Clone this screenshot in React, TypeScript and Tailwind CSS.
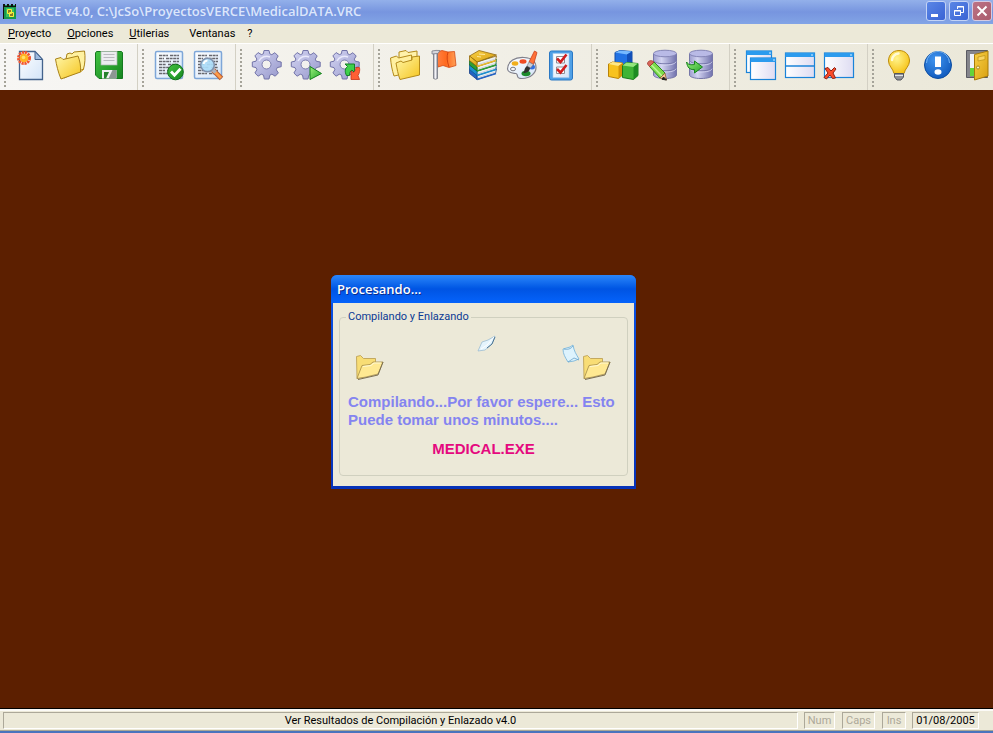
import React from 'react';

interface ToolItem {
  label: string;
  icon: React.ReactNode;
}

interface ToolGroup {
  width: string;
  items: ToolItem[];
}

const GEAR_PATH =
  'M13 1.500h5l.8 3.300 2 .9 3.100-2 3.300 3.300-1.900 3.100.9 2.100 4 .8v4.700l-4 .9-.9 2.200 2.100 3.100-3.200 3.300-3.300-2-2 .9-.9 3.900h-4.700l-.8-3.900-2.200-.9-3.200 2-3.200-3.200 2-3.300-.9-2.100-3.700-.9V13l3.700-.8.9-2.200-2-3.100 3.200-3.300 3.300 2 2-.8z';

const Gear: React.FC = () => (
  <>
    <path d={GEAR_PATH} fill="url(#steel)" stroke="#7273a8" strokeWidth="1" strokeLinejoin="round" />
    <circle cx="15.500" cy="15.500" r="4.500" fill="#f2f1ee" stroke="#7c7db0" strokeWidth="1" />
    <path d="M8 12a8.500 8.500 0 0 1 11-4" fill="none" stroke="#e9e9fb" strokeWidth="1.500" />
  </>
);

const Report: React.FC = () => (
  <>
    <rect x="2.500" y="2.500" width="27" height="27" rx="1.500" fill="url(#paper)" stroke="#7ea6d8" strokeWidth="1.500" />
    <path
      d="M6 6.500h9M17 6.500h9M6 9.500h5M13 9.500h13M6 12.500h12M20 12.500h6M6 15.500h7M15 15.500h10M6 18.500h11M19 18.500h7M6 21.500h6M14 21.500h12M6 24.500h9M17 24.500h6"
      stroke="#66666c"
      strokeWidth="1.600"
      strokeDasharray="3 .6"
    />
  </>
);

const Database: React.FC<{ x: number }> = ({ x }) => (
  <g transform={`translate(${x} 0)`}>
    <path d="M.5 5v21c0 2 5 3.500 11.500 3.500S23.500 28 23.500 26V5z" fill="url(#cyl)" stroke="#7677a8" />
    <ellipse cx="12" cy="4.500" rx="11.500" ry="3.300" fill="#b9bae6" stroke="#8485b6" />
    <path d="M.5 11.500c1 2.500 6 3.300 11.500 3.300s10.500-.8 11.500-3.300M.5 18.500c1 2.500 6 3.300 11.500 3.300s10.500-.8 11.500-3.300" fill="none" stroke="#7475a9" />
    <path d="M1 12.700c1 2.500 6 3.300 11 3.300s10-.8 11-3.300M1 19.700c1 2.500 6 3.300 11 3.300s10-.8 11-3.300" fill="none" stroke="#dcdcf6" strokeWidth=".8" />
  </g>
);

const Book: React.FC<{ y: number; cover: string; edge: string }> = ({ y, cover, edge }) => (
  <g transform={`translate(0 ${y})`}>
    <path d="M10 13l19.500-6-1 4.500L10 17.500z" fill="#eef2f4" stroke={edge} strokeWidth=".8" />
    <path d="M11 15.500l17.500-5.500" stroke="#b7bcc6" strokeWidth=".6" />
    <path d="M2.500 7L12 1.500 29.500 6 10 13z" fill={cover} stroke={edge} strokeWidth=".8" />
    <path d="M2.500 7L10 13v4.500L2.500 11.500z" fill={cover} stroke={edge} strokeWidth=".8" />
    <path d="M10 17.500L29 11.500" stroke={cover} strokeWidth="1.500" />
  </g>
);

const NewIcon = (
  <>
    <path d="M4.500 2.500h15.500l7.500 8v20h-23z" fill="url(#paper)" stroke="#44638c" strokeWidth="1.300" />
    <path d="M20 2.500v8h7.500z" fill="#9dbbe0" stroke="#44638c" strokeLinejoin="round" />
    <circle cx="9" cy="9" r="5.500" fill="none" stroke="#f4552e" strokeWidth="3" strokeDasharray="2.200 .7" />
    <circle cx="9" cy="9" r="4.300" fill="#ffb321" />
    <circle cx="8.500" cy="8.500" r="1.800" fill="#ffe06a" />
  </>
);

const OpenIcon = (
  <>
    <path d="M12 10l1-5 3-1 2 1 2-2 10.500-1c1 6 .5 13-1 18L10 29z" fill="#fff1a0" stroke="#a98218" />
    <path d="M1.500 10L7 8.500l2 2 15-3.500c2 5 3 10.500 2.500 16L7 30C4 23 2.500 16 1.500 10z" fill="url(#folder)" stroke="#a98218" />
    <path d="M26.500 23l3.500-3" stroke="#c89a15" />
  </>
);

const SaveIcon = (
  <>
    <path d="M3.500 2.500h25l1 1v26H6l-3.500-3.500v-22z" fill="url(#green)" stroke="#14791f" />
    <rect x="8" y="2.500" width="16" height="13.500" fill="#ececf0" stroke="#a9b6ab" strokeWidth=".7" />
    <path d="M10.500 5.500h11M10.500 8.500h11M10.500 11.500h11" stroke="#b9b9bf" />
    <path d="M9 21h14.500v8.500H9z" fill="#eeeef1" />
    <path d="M11 23h5l-3 6.500h-2z" fill="#26812c" />
    <path d="M19.500 21h4v8.500h-8z" fill="#8d9693" />
  </>
);

const CompileIcon = (
  <>
    <Report />
    <circle cx="22.500" cy="23" r="7.800" fill="url(#green)" stroke="#12701c" />
    <path d="M18 22.500l3.500 3.800 6-6.500" fill="none" stroke="#fff" strokeWidth="2.800" />
  </>
);

const PreviewIcon = (
  <>
    <Report />
    <path d="M21 21l8.500 8.500" stroke="#b45a35" strokeWidth="5" />
    <path d="M21 21l8 8" stroke="#ff9c48" strokeWidth="3" />
    <path d="M20 20l3.500 3.500" stroke="#adb2bd" strokeWidth="3.500" />
    <circle cx="15.500" cy="16" r="6.800" fill="#abdcf8" fillOpacity=".92" stroke="#7e91ad" strokeWidth="1.500" />
    <path d="M11.500 15a4.500 4.500 0 0 1 4-3.500" fill="none" stroke="#fff" strokeWidth="1.800" />
  </>
);

const RunIcon = (
  <>
    <Gear />
    <path d="M20 17.500l11.500 7L20 30.500z" fill="url(#leaf)" stroke="#13801b" strokeLinejoin="round" />
  </>
);

const RebuildIcon = (
  <>
    <Gear />
    <path d="M17.500 26.500c-2-4-1.500-7 1-9L16 15h9.500v8.500L23 21c-2 1.200-2.500 3-2.500 5.500z" fill="#3fd04c" stroke="#137f24" strokeLinejoin="round" />
    <path d="M27 18.500h3.500c.5 3 0 5.500-1.500 8l1.500 4h-8.500V22l2.500 1.500c1.500-1.200 2.500-3 2.500-5z" fill="#ff6034" stroke="#c93317" strokeWidth=".8" strokeLinejoin="round" />
  </>
);

const FoldersIcon = (
  <>
    <path d="M10 8V3l7-1.500 2 2 9-1.500v15l-18 4z" fill="#fff2aa" stroke="#b38a1a" />
    <path d="M1.500 9l6-2 2 2 13-3 1 17L5 27C3 21 2 15 1.500 9z" fill="#fff0a0" stroke="#b38a1a" />
    <path d="M7 14l5-2 2 1.500L23 11V8l7.500-1v19L11 30.500c-2-5-3-11-4-16.500z" fill="url(#folder)" stroke="#b38a1a" />
  </>
);

const FlagIcon = (
  <>
    <path d="M8 3.500l6-2 6 1.500 6.500-.5 1.500 14-7 2-6-2-5 1.500z" fill="url(#flag)" stroke="#d34b14" strokeWidth=".8" />
    <path d="M20 3c-1.500 5-1 9 1 15" stroke="#d34310" fill="none" />
    <path d="M5.500 4h4v25.500q-2 1.500-4 0z" fill="url(#pole)" stroke="#747782" strokeWidth=".8" />
    <path d="M4 5V2q4-1 8-.5l-2 3z" fill="#d5d6dc" stroke="#777a86" strokeWidth=".8" />
  </>
);

const BooksIcon = (
  <>
    <Book y={13} cover="#2463c4" edge="#173f86" />
    <Book y={9} cover="#1c8fd0" edge="#115f96" />
    <Book y={4.5} cover="#2f9e33" edge="#1a6a22" />
    <Book y={0} cover="url(#gold)" edge="#94690d" />
    <path d="M12 5l6 .5M10 7.500l4 .5" stroke="#ffe99d" />
  </>
);

const PaletteIcon = (
  <>
    <path d="M1.500 20C2 12 9 8 18 8.500s12 5 12 10-5 11-14 11c-7 0-3-4-6-5-3-.5-8 0-8.500-4.500z" fill="url(#paper)" stroke="#80808b" strokeWidth="1.200" />
    <ellipse cx="9" cy="14.500" rx="3.300" ry="2.200" fill="#f0ae1d" />
    <ellipse cx="17" cy="12.500" rx="3.500" ry="2.200" fill="#ef4b24" />
    <ellipse cx="7" cy="20" rx="2.500" ry="1.800" fill="#f5f5f7" stroke="#777781" />
    <ellipse cx="26" cy="18" rx="3" ry="2.500" fill="#326fe0" />
    <ellipse cx="20" cy="24.500" rx="4.500" ry="2.800" fill="#1c8b2d" />
    <path d="M23 13l5.500-11 2.500 1.500L27.500 15.500z" fill="#ff7138" stroke="#c9401c" strokeWidth=".8" />
    <path d="M21 17l2-4 4.500 2.500-3 3.500z" fill="#c9ccd4" stroke="#6e717b" strokeWidth=".6" />
    <path d="M17 24c2-2 1-5 4-7l3 2c0 3-3 5-7 5z" fill="#303030" />
  </>
);

const ChecklistIcon = (
  <>
    <rect x="4.500" y="2" width="23" height="29" rx="2" fill="#4fa0e6" stroke="#2a78c4" />
    <rect x="8" y="4.500" width="16" height="24" fill="url(#paper)" stroke="#a7c9ec" strokeWidth=".6" />
    <path d="M11.500 7.500h8v6.500h-8zM11.500 18h8v6.500h-8z" fill="#fff" stroke="#8d8d95" />
    <path d="M12 9.500l3.500 3.500 6-7.500M12 20l3.500 3.500 6-7.500" fill="none" stroke="#d21d1d" strokeWidth="2.600" />
  </>
);

const CubesIcon = (
  <>
    <path d="M8 3.500l5-2 12 1v13l-5 3-12-2z" fill="#2272e4" stroke="#114da8" />
    <path d="M8 3.500l5-2 12 1-5 3z" fill="#76b9ff" />
    <path d="M20 5.500l5-3v13l-5 3z" fill="#124fb8" />
    <path d="M1.500 15l4-2 10 1v12l-4 3.500-10-2z" fill="#f8c21e" stroke="#b98308" />
    <path d="M1.500 15l4-2 10 1-4 3z" fill="#ffe889" />
    <path d="M11.500 17l4-3v12l-4 3.500z" fill="#d59307" />
    <path d="M15.500 16.500l4-3 11.500 1v12l-4.500 4-11-2z" fill="#3fb436" stroke="#187d1c" />
    <path d="M15.500 16.500l4-3 11.500 1-4.500 3.500z" fill="#94e67d" />
    <path d="M26.500 18l4.500-3.500v12l-4.500 4z" fill="#1c8b22" />
  </>
);

const DbEditIcon = (
  <>
    <Database x={7} />
    <path d="M3.500 17.500L8 13l11 11-5 5z" fill="#7ddb4b" stroke="#2f8d22" />
    <path d="M5.500 16L16 27" stroke="#bdf598" strokeWidth="1.500" />
    <path d="M1.500 15c0-3 3-4 5-3L8 13l-4.500 4.500z" fill="#d9665a" stroke="#a2362e" strokeWidth=".8" />
    <path d="M19 24l1.500 7-6.500-2z" fill="#f3c490" stroke="#8a5e35" strokeWidth=".8" />
    <path d="M17.500 28l3 3-4.500-.7z" fill="#222" stroke="#222" />
  </>
);

const DbImportIcon = (
  <>
    <Database x={4} />
    <path d="M1.500 13c2 3 4 3 8 2.500V12l8 6-8 6v-3.500c-5 .5-7-2-8-7.500z" fill="url(#leaf)" stroke="#18861d" />
  </>
);

const CascadeIcon = (
  <>
    <rect x="1.500" y="2" width="25" height="21.500" fill="url(#pane)" stroke="#1a83d8" strokeWidth="1.200" />
    <path d="M1.500 2h25v4h-25z" fill="#2c9bee" />
    <rect x="5.500" y="9" width="25" height="21.500" fill="url(#pane)" stroke="#1a83d8" strokeWidth="1.200" />
    <path d="M5.500 9h25v4h-25z" fill="#2c9bee" />
    <path d="M24 4h2M28 11h2" stroke="#d9efff" />
  </>
);

const TileIcon = (
  <>
    <rect x="1.500" y="4" width="29" height="24.500" fill="url(#pane)" stroke="#1a83d8" strokeWidth="1.200" />
    <path d="M1.500 4h29v4h-29z" fill="#2c9bee" />
    <path d="M1.500 17h29" stroke="#1a83d8" strokeWidth="1.500" />
    <path d="M27 6h2" stroke="#d9efff" />
  </>
);

const CloseWindowIcon = (
  <>
    <rect x="1.500" y="4" width="29" height="24.500" fill="url(#pane)" stroke="#1a83d8" strokeWidth="1.200" />
    <path d="M1.500 4h29v4h-29z" fill="#2c9bee" />
    <path d="M2 19.500l3-1 3 3.500 3.500-3.500 1.500 1.500-3 4 2.500 5-3 .5-2.500-3.500L3.500 30 1 28.500 5 24z" fill="#fb4b2a" stroke="#8a2216" />
    <path d="M27 6h2" stroke="#d9efff" />
  </>
);

const BulbIcon = (
  <>
    <path d="M16 1.500C9.500 1.500 5.500 6 5.500 12c0 5 4.500 7.500 5.500 12.500h10c1-5 5.500-7.500 5.500-12.500 0-6-4-10.500-10.500-10.500z" fill="url(#bulb)" stroke="#bd8c0b" />
    <path d="M9 11c.5-4 3-6 6.500-6.500" stroke="#fffbd6" strokeWidth="2.500" fill="none" strokeLinecap="round" />
    <path d="M11.500 24.500h9v3.500l-2.500 3h-4l-2.500-3z" fill="#8e9098" stroke="#54565e" />
    <path d="M12 26.500h8" stroke="#e3e4e8" />
  </>
);

const InfoIcon = (
  <>
    <circle cx="16" cy="16" r="13.500" fill="url(#info)" stroke="#0d4da0" />
    <path d="M4.500 14a11.500 11.500 0 0 1 23 0" fill="none" stroke="#76b6f6" />
    <path d="M13 7.500h6v10.500h-6z" fill="#fff" />
    <ellipse cx="16" cy="23" rx="3.500" ry="2.800" fill="#fff" />
  </>
);

const DoorIcon = (
  <>
    <path d="M5.500 1.500h21v27h-21z" fill="#85858c" stroke="#5a5a62" />
    <path d="M9 5h8v14H9z" fill="#eef3fb" />
    <path d="M9 19h6v8H9z" fill="#64d43b" />
    <path d="M13.500 5.500l13.500-3.500v25l-13.500 4z" fill="url(#gold)" stroke="#a77a0b" />
    <path d="M17 8l7-1.500v4L17 12z" fill="#f8d465" stroke="#c29818" strokeWidth=".8" />
    <circle cx="17" cy="18.500" r="1.500" fill="#fff5ba" stroke="#8a6713" strokeWidth=".7" />
  </>
);

const TOOL_GROUPS: ToolGroup[] = [
  {
    width: 'w-[138px]',
    items: [
      { label: 'Nuevo', icon: NewIcon },
      { label: 'Abrir', icon: OpenIcon },
      { label: 'Guardar', icon: SaveIcon },
    ],
  },
  {
    width: 'w-[98px]',
    items: [
      { label: 'Verificar', icon: CompileIcon },
      { label: 'Vista previa', icon: PreviewIcon },
    ],
  },
  {
    width: 'w-[138px]',
    items: [
      { label: 'Compilar', icon: <Gear /> },
      { label: 'Ejecutar', icon: RunIcon },
      { label: 'Reconstruir', icon: RebuildIcon },
    ],
  },
  {
    width: 'w-[218px]',
    items: [
      { label: 'Carpetas', icon: FoldersIcon },
      { label: 'Marcador', icon: FlagIcon },
      { label: 'Bibliotecas', icon: BooksIcon },
      { label: 'Colores', icon: PaletteIcon },
      { label: 'Tareas', icon: ChecklistIcon },
    ],
  },
  {
    width: 'w-[138px]',
    items: [
      { label: 'Módulos', icon: CubesIcon },
      { label: 'Editar datos', icon: DbEditIcon },
      { label: 'Importar datos', icon: DbImportIcon },
    ],
  },
  {
    width: 'w-[138px]',
    items: [
      { label: 'Cascada', icon: CascadeIcon },
      { label: 'Mosaico', icon: TileIcon },
      { label: 'Cerrar ventana', icon: CloseWindowIcon },
    ],
  },
  {
    width: 'w-[138px]',
    items: [
      { label: 'Sugerencias', icon: BulbIcon },
      { label: 'Acerca de', icon: InfoIcon },
      { label: 'Salir', icon: DoorIcon },
    ],
  },
];

// Shared gradients for the toolbar drawings
const Gradients: React.FC = () => (
  <svg width="0" height="0" className="absolute" aria-hidden="true">
    <defs>
      <linearGradient id="steel" x1="0" y1="0" x2="1" y2="1">
        <stop offset="0" stopColor="#d4d5f2" />
        <stop offset="1" stopColor="#9697cb" />
      </linearGradient>
      <linearGradient id="cyl">
        <stop offset="0" stopColor="#9c9dce" />
        <stop offset=".35" stopColor="#d3d4f1" />
        <stop offset="1" stopColor="#7172ad" />
      </linearGradient>
      <linearGradient id="paper" x1="0" y1="0" x2="1" y2="1">
        <stop offset="0" stopColor="#ffffff" />
        <stop offset="1" stopColor="#d3e4f8" />
      </linearGradient>
      <linearGradient id="pane">
        <stop offset="0" stopColor="#ffffff" />
        <stop offset="1" stopColor="#dedcf2" />
      </linearGradient>
      <linearGradient id="folder" x1="0" y1="0" x2="1" y2="1">
        <stop offset="0" stopColor="#fff6a8" />
        <stop offset="1" stopColor="#f5c51f" />
      </linearGradient>
      <linearGradient id="green" x1="0" y1="0" x2="1" y2="1">
        <stop offset="0" stopColor="#43c442" />
        <stop offset="1" stopColor="#15851f" />
      </linearGradient>
      <linearGradient id="leaf" x1="0" y1="0" x2="1" y2="1">
        <stop offset="0" stopColor="#9cf07c" />
        <stop offset="1" stopColor="#22a52a" />
      </linearGradient>
      <linearGradient id="pole">
        <stop offset="0" stopColor="#9fa1ab" />
        <stop offset=".5" stopColor="#f4f4f8" />
        <stop offset="1" stopColor="#878a96" />
      </linearGradient>
      <linearGradient id="flag">
        <stop offset="0" stopColor="#ff8347" />
        <stop offset=".5" stopColor="#ff6a1e" />
        <stop offset="1" stopColor="#ffa057" />
      </linearGradient>
      <linearGradient id="gold" x1="0" y1="0" x2="1" y2="1">
        <stop offset="0" stopColor="#f8d047" />
        <stop offset="1" stopColor="#d9a010" />
      </linearGradient>
      <radialGradient id="bulb" cx=".4" cy=".35" r=".7">
        <stop offset="0" stopColor="#fff48c" />
        <stop offset="1" stopColor="#f6c012" />
      </radialGradient>
      <radialGradient id="info" cx=".4" cy=".3" r=".8">
        <stop offset="0" stopColor="#3f94ef" />
        <stop offset="1" stopColor="#0c54b8" />
      </radialGradient>
    </defs>
  </svg>
);

const TitleBar: React.FC = () => (
  <header className="flex h-6 shrink-0 items-center bg-linear-to-b from-[#93b0ea] via-[#7795df] to-[#82a4e6] pl-[3px] font-['Open_Sans',sans-serif]">
    <svg width="13" height="16" viewBox="0 0 13 16" className="mr-1.5 shrink-0" aria-hidden="true">
      <path d="M0 1h13v14H0z" fill="#17984d" />
      <path d="M0 0h2v2h2V0h2v2h2V0h2v2h2V0h1v3H1v12H0z" fill="#101010" />
      <path d="M3 4h8v9H3z" fill="#35bd62" />
      <path d="M4.500 5.500h4v4h-4zM6.500 8.500h4v4h-4z" fill="#8d7a28" stroke="#f5ef39" />
    </svg>
    <h1 className="min-w-0 grow truncate text-[13px] font-semibold text-[#dce6fb]">
      VERCE v4.0, C:\JcSo\ProyectosVERCE\MedicalDATA.VRC
    </h1>
    <div className="flex shrink-0 gap-[3px] pb-[3px] pr-px">
      <button aria-label="Minimizar" className="size-5 rounded-[3px] border border-[#c3d3f6] bg-linear-to-br from-[#5a86e6] to-[#3a63d4]">
        <svg width="18" height="18" viewBox="0 0 18 18">
          <path d="M4 12h7v3H4z" fill="#fff" />
        </svg>
      </button>
      <button aria-label="Restaurar" className="size-5 rounded-[3px] border border-[#c3d3f6] bg-linear-to-br from-[#5a86e6] to-[#3a63d4]">
        <svg width="18" height="18" viewBox="0 0 18 18" fill="none" stroke="#fff">
          <path d="M7.500 7V4.500h6v6H11M7 5h7" />
          <path d="M4.500 8.500h6v5h-6zM4 9h7" />
        </svg>
      </button>
      <button aria-label="Cerrar" className="size-5 rounded-[3px] border border-[#d5cbe2] bg-linear-to-br from-[#bd7386] to-[#a95c6d]">
        <svg width="18" height="18" viewBox="0 0 18 18">
          <path d="M4.500 4.500l9 9M13.500 4.500l-9 9" stroke="#fff" strokeWidth="2" />
        </svg>
      </button>
    </div>
  </header>
);

const MenuBar: React.FC = () => (
  <nav className="flex h-[19px] shrink-0 items-center bg-[#ece9d8] pl-2 pt-0.5 text-[11px] text-black">
    <button className="mr-4"><u>P</u>royecto</button>
    <button className="mr-4"><u>O</u>pciones</button>
    <button className="mr-5"><u>U</u>tilerias</button>
    <button className="mr-3">Ventanas</button>
    <button>?</button>
  </nav>
);

const ToolBar: React.FC = () => (
  <div role="toolbar" className="flex h-[47px] shrink-0 overflow-hidden border-t border-white bg-linear-to-r from-[#f7f6f4] to-[#ebe8d9]">
    {TOOL_GROUPS.map((group, i) => (
      <div key={i} className={`${group.width} flex shrink-0 border-r border-[#d3d0c4] pt-[5px]`}>
        <div className="ml-1 mr-[9px] h-10 w-0.5 shrink-0 bg-[repeating-linear-gradient(#a5a399_0_2px,transparent_2px_4px)]" />
        <div className="flex gap-[7px]">
          {group.items.map(item => (
            <button key={item.label} aria-label={item.label} className="size-8 shrink-0">
              <svg width="32" height="32" viewBox="0 0 32 32">{item.icon}</svg>
            </button>
          ))}
        </div>
      </div>
    ))}
  </div>
);

const SmallFolder: React.FC<{ x: number }> = ({ x }) => (
  <g transform={`translate(${x} 20)`}>
    <path d="M.5 1.500l4-1 3 3h12v3l-2 12L1 23.500z" fill="#f8dd75" stroke="#b89a4c" strokeWidth=".8" />
    <path d="M1 23.500l5-13 8-1 3-2.500h10l-5 12-12 3z" fill="#ffe992" stroke="#a58c48" strokeWidth=".8" />
    <path d="M7 11.500l8-1L18 8h7" fill="none" stroke="#fff9d4" />
    <path d="M2 24.500l20-4.500 5-13" fill="none" stroke="#7a6e50" />
  </g>
);

const ProcessDialog: React.FC = () => (
  <div
    role="dialog"
    aria-labelledby="dialog-title"
    className="absolute left-[331px] top-[185px] w-[305px] overflow-hidden rounded-t-md bg-linear-to-b from-[#0a55ea] to-[#0632b8]"
  >
    <h2
      id="dialog-title"
      className="flex h-7 items-center bg-linear-to-b from-[#2a86fa] via-[#0054e3] to-[#0563fb] pl-1.5 pt-0.5 font-['Open_Sans',sans-serif] text-[13px] font-semibold text-white [text-shadow:1px_1px_#0b2d8c]"
    >
      Procesando...
    </h2>
    <div className="mx-0.5 mb-[3px] bg-[#ece9d8] px-1.5 pb-2.5 pt-1.5">
      <fieldset className="rounded-[4px] border border-[#d0d0bf] px-2 pb-4">
        <legend className="-ml-0.5 px-0.5 text-[11px] leading-4 text-[#0b3a94]">Compilando y Enlazando</legend>
        <svg width="264" height="46" viewBox="0 0 264 46" className="mt-2.5 block" aria-hidden="true">
          <SmallFolder x={8} />
          <path d="M130 16l4-9 6-2 7-4-3 8-7 6z" fill="#e4f4fd" stroke="#9dbdd2" strokeWidth=".8" />
          <path d="M133 14l6-4 7-8" fill="none" stroke="#fff" />
          <path d="M139 13l5-4 3-7" fill="none" stroke="#4a7392" />
          <path d="M215 14l7-2 3-2c1 6 3 9 6 14l-5 2-6 1c-3-5-5-8-5-13z" fill="#ddf3fd" stroke="#6fb0d9" strokeWidth=".8" />
          <path d="M216 14c3 1 7 0 9-3M231 25l-5-2-6 4" fill="none" stroke="#6ba3c9" strokeWidth=".8" />
          <SmallFolder x={235} />
        </svg>
        <p className="mt-3 whitespace-nowrap font-['Liberation_Sans',sans-serif] text-[15px] font-bold leading-[18px] text-[#8484f0]">
          Compilando...Por favor espere... Esto
          <br />
          Puede tomar unos minutos....
        </p>
        <p className="mt-2.5 text-center font-['Liberation_Sans',sans-serif] text-[15px] font-bold leading-5 text-[#e5097f]">
          MEDICAL.EXE
        </p>
      </fieldset>
    </div>
  </div>
);

const StatusBar: React.FC = () => (
  <footer className="flex h-[25px] shrink-0 items-start border-b-2 border-t border-b-[#4a74bd] border-t-black bg-[#ece9d8] pl-[3px] pr-3.5 pt-[3px] text-[11px] leading-4 shadow-[inset_0_2px_#fbfaf6,inset_0_-1px_#a9a796]">
    <div className="h-[17px] grow border border-[#aca899] border-b-white border-r-white text-center">
      Ver Resultados de Compilación y Enlazado v4.0
    </div>
    <div className="ml-1.5 h-[17px] w-[31px] border border-[#aca899] border-b-white border-r-white text-center text-[#aca899]">Num</div>
    <div className="ml-[7px] h-[17px] w-[33px] border border-[#aca899] border-b-white border-r-white text-center text-[#aca899]">Caps</div>
    <div className="ml-[7px] h-[17px] w-6 border border-[#aca899] border-b-white border-r-white text-center text-[#aca899]">Ins</div>
    <div className="ml-1.5 h-[17px] w-[67px] border border-[#aca899] border-b-white border-r-white text-center">01/08/2005</div>
  </footer>
);

const App: React.FC = () => {
  return (
    <div className="flex min-h-screen flex-col overflow-hidden bg-[#5c1f00] font-[Roboto,sans-serif]">
      <Gradients />
      <TitleBar />
      <MenuBar />
      <ToolBar />
      <main className="relative min-h-[420px] grow">
        <ProcessDialog />
      </main>
      <StatusBar />
    </div>
  );
};

export default App;
